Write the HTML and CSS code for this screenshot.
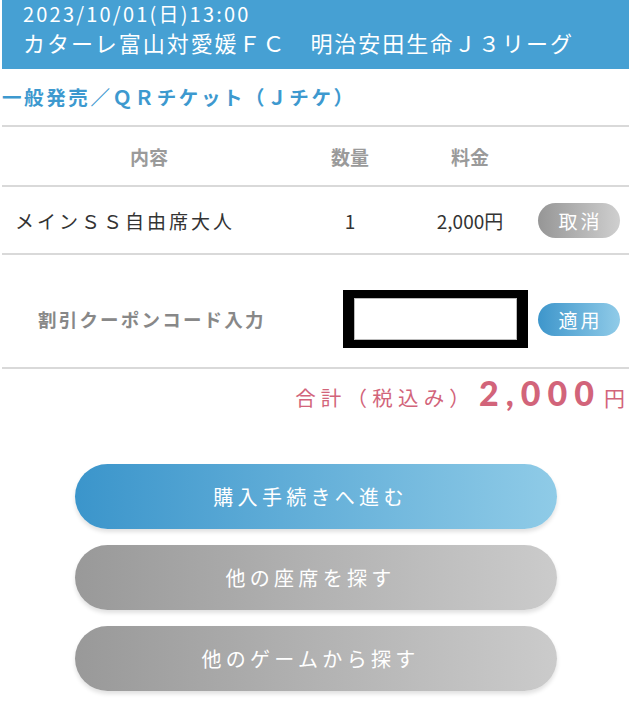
FILE: index.html
```html
<!DOCTYPE html>
<html lang="ja">
<head>
<meta charset="utf-8">
<link rel="stylesheet" href="styles.css">
</head>
<body>
<div class="page">
  <header class="hdr">
    <div class="hdr-date">2023/10/01(日)13:00</div>
    <div class="hdr-title">カターレ富山対愛媛ＦＣ　明治安田生命Ｊ３リーグ</div>
  </header>
  <div class="sub">一般発売／ＱＲチケット（Ｊチケ）</div>
  <div class="row head">
    <div class="c1">内容</div>
    <div class="c2">数量</div>
    <div class="c3">料金</div>
    <div class="c4"></div>
  </div>
  <div class="row item">
    <div class="c1 name">メインＳＳ自由席大人</div>
    <div class="c2">1</div>
    <div class="c3">2,000円</div>
    <div class="c4"><span class="pill grey">取消</span></div>
  </div>
  <div class="coupon">
    <div class="coupon-label">割引クーポンコード入力</div>
    <div class="redact"><div class="input"></div></div>
    <span class="pill blue">適用</span>
  </div>
  <div class="total">
    <span class="total-label">合計（税込み）</span><span class="total-num">2,000</span><span class="total-yen">円</span>
  </div>
  <div class="actions">
    <button class="btn btn-blue">購入手続きへ進む</button>
    <button class="btn btn-grey">他の座席を探す</button>
    <button class="btn btn-grey">他のゲームから探す</button>
  </div>
</div>
</body>
</html>
```
FILE: styles.css
```css
* { box-sizing: border-box; }
html, body { margin: 0; padding: 0; background: #fff; }
body {
  font-family: "Noto Sans CJK JP", "Noto Sans", sans-serif;
  width: 632px;
  height: 701px;
  overflow: hidden;
}
.page { padding: 0 3px 0 2px; }
.hdr {
  background: #46a0d3;
  height: 70px;
  padding: 0 0 0 21px;
  color: #fff;
}
.hdr-date {
  font-size: 20px;
  line-height: 29px;
  letter-spacing: 2.2px;
  margin-top: -1px;
}
.hdr-title {
  font-size: 22px;
  line-height: 24px;
  letter-spacing: 1.95px;
  margin-top: 2px;
}
.sub {
  color: #3d99cf;
  font-size: 19.5px;
  font-weight: 700;
  letter-spacing: 2.6px;
  line-height: 24px;
  padding-top: 16px;
  height: 58px;
  border-bottom: 2px solid #d9d9d9;
}
.row {
  display: grid;
  grid-template-columns: 294px 108px 132px 84px;
  align-items: center;
  border-bottom: 2px solid #d9d9d9;
}
.row > div { text-align: center; }
.head {
  height: 60px;
  color: #9a9a9a;
  font-size: 19px;
  font-weight: 700;
}
.item {
  height: 68px;
  color: #333;
  font-size: 19px;
}
.item .name {
  text-align: left;
  padding-left: 13px;
  letter-spacing: 3px;
  font-size: 19px;
}
.c4 { display: flex; justify-content: flex-end; }
.pill {
  display: inline-flex;
  align-items: center;
  justify-content: center;
  width: 82px;
  height: 35px;
  border-radius: 18px;
  color: #fff;
  font-size: 19px;
  letter-spacing: 3px;
  padding-left: 3px;
}
.pill.grey { background: linear-gradient(90deg, #969696, #cfcfcf); }
.pill.blue {
  height: 33px;
  background: linear-gradient(90deg, #3e96cb, #90cbe8);
}
.coupon {
  display: flex;
  align-items: center;
  height: 114px;
  border-bottom: 2px solid #d9d9d9;
  padding-left: 36px;
  padding-top: 32px;
  padding-bottom: 16px;
}
.coupon-label {
  color: #888;
  font-size: 18.5px;
  font-weight: 700;
  letter-spacing: 2.2px;
  width: 305px;
}
.redact {
  width: 185px;
  height: 58px;
  background: #000;
  padding: 8px 11px;
  margin-right: 10px;
}
.input {
  width: 100%;
  height: 100%;
  background: #fff;
  border: 1px solid #bbb;
}
.total {
  display: flex;
  justify-content: flex-end;
  align-items: baseline;
  color: #d2647a;
  padding-right: 4px;
  height: 50px;
  padding-top: 3px;
}
.total-label {
  font-size: 20.5px;
  letter-spacing: 5.2px;
  margin-right: 4px;
}
.total-num {
  font-size: 34px;
  font-family: "Lato", "Noto Sans", sans-serif;
  font-weight: 900;
  letter-spacing: 7px;
  margin-right: 3px;
}
.total-yen { font-size: 21px; }
.actions {
  display: flex;
  flex-direction: column;
  align-items: center;
  gap: 16px;
  padding-top: 45px;
}
.btn {
  width: 482px;
  height: 65px;
  border: none;
  border-radius: 33px;
  color: #fff;
  font-family: "Noto Sans CJK JP", sans-serif;
  font-size: 20px;
  letter-spacing: 4.3px;
  padding: 0 10px 0 0;
  box-shadow: 0 3px 4px rgba(0,0,0,0.12);
}
.btn-blue { background: linear-gradient(90deg, #3b95cb, #8fcbe7); }
.btn-grey { background: linear-gradient(90deg, #999999, #cbcbcb); }
```
